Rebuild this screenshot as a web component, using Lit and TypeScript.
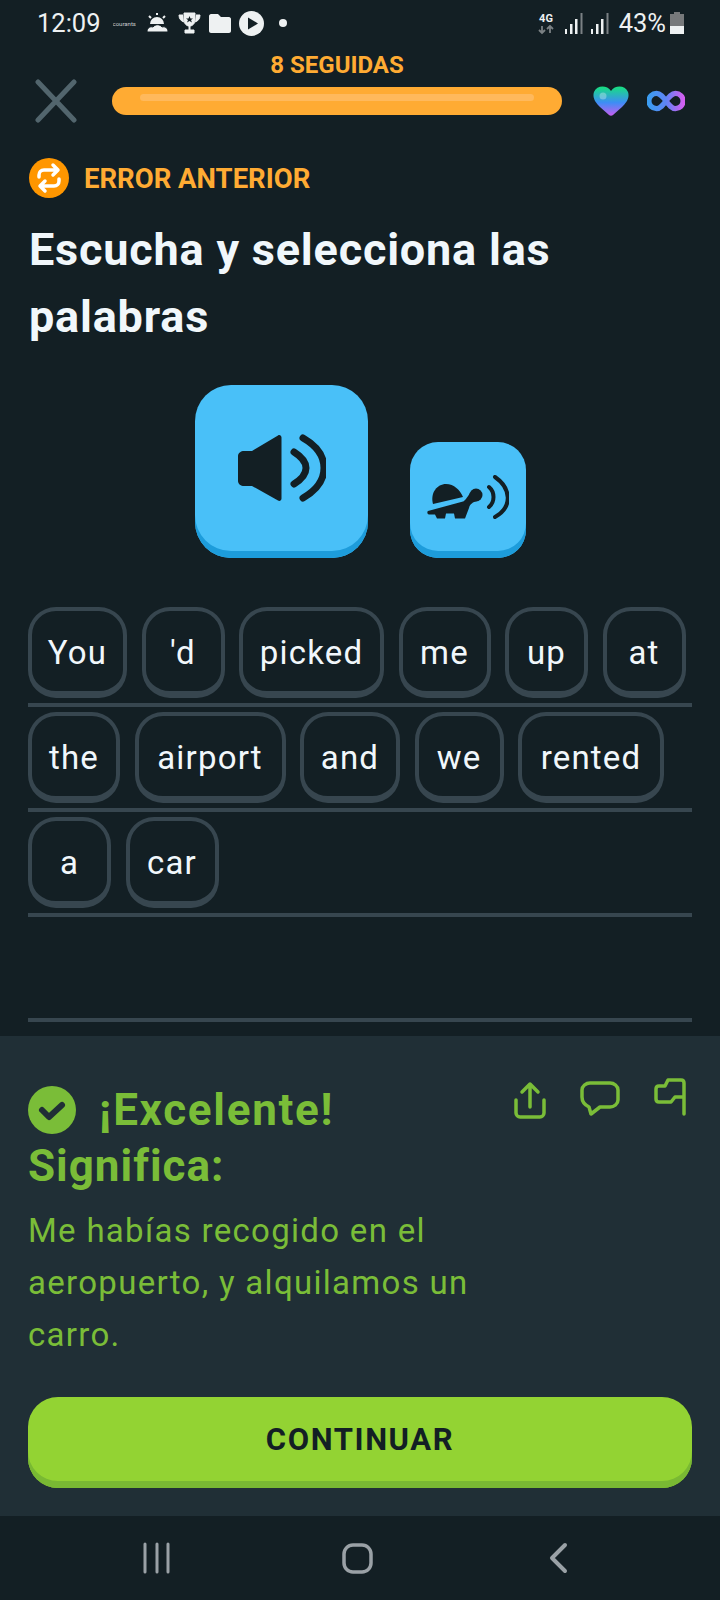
import { LitElement, html, css, svg } from 'lit';
import { customElement } from 'lit/decorators.js';

// chip widths are per word, the reference font is a bit wider than Roboto
const ROWS: [string, number][][] = [
  [['You', 99], ["'d", 83], ['picked', 145], ['me', 92], ['up', 83], ['at', 83]],
  [['the', 92], ['airport', 151], ['and', 100], ['we', 89], ['rented', 146]],
  [['a', 83], ['car', 93]],
  [],
];

const speaker = svg`
  <path d="M6 17h8L40 1.500c1.500-1 3.500 0 3.500 2v61c0 2-2 3-3.500 2L14 52H6c-3 0-6-2-6-5V22c0-3 3-5 6-5z" fill="#131f24"/>
  <path d="M56 18C72 28 72 40 56 50M65 4C93 20 93 48 65 64" fill="none" stroke="#131f24" stroke-width="7" stroke-linecap="round"/>`;

const turtle = svg`
  <path d="M6 29C3 18 10 9 19 9c8 0 14 6 17 13z" fill="#131f24"/>
  <path d="M1 36l35-9.500c2-.5 4-4 7-8.500l7 8c-4 1-7 3-8 7l-4 10.500H28l-1-5h-8l-1 5h-8l-2-4H2c-2 0-2-3-1-3.500z" fill="#131f24"/>
  <circle cx="49" cy="20" r="6.500" fill="#131f24"/>
  <path d="M62 12c6 5 6 15 0 20M68 2c16 11 18 30 0 40" fill="none" stroke="#131f24" stroke-width="4" stroke-linecap="round"/>`;

@customElement('app-root')
export class AppRoot extends LitElement {
  static styles = css`
    :host {
      display: block;
      width: 720px;
      height: 1600px;
      overflow: hidden;
      background: #131f24;
      font-family: Roboto, 'Liberation Sans', sans-serif;
      color: #f1f7fb;
    }
    .page {
      display: flex;
      flex-direction: column;
      height: 1600px;
    }
    .status {
      height: 46px;
      padding: 0 36px 0 37px;
      display: flex;
      align-items: center;
      color: #eef1f2;
      font-size: 25.500px;
      box-sizing: border-box;
    }
    .status .time { margin-right: 4px; }
    .status .tiny { font-size: 6px; width: 23px; margin-right: 10px; text-align: center; overflow: hidden; color: #c9cdcf; }
    .status .left { display: flex; align-items: center; gap: 8px; }
    .status .right { margin-left: auto; display: flex; align-items: center; }
    .status svg { display: block; }
    .dot { width: 8px; height: 8px; border-radius: 50%; background: #eef1f2; margin-left: 7px; }
    .pct { margin: 0 4px 0 9px; }

    .streak {
      height: 30px;
      margin-top: 4px;
      text-align: center;
      width: 674px;
      color: #ffab33;
      font-size: 24px;
      font-weight: 700;
      line-height: 30px;
    }
    .top {
      display: flex;
      align-items: center;
      height: 28px;
      margin-top: 7px;
      padding-left: 35px;
    }
    .close { margin-right: 35px; }
    .bar {
      width: 450px;
      height: 28px;
      border-radius: 14px;
      background: #ffab33;
      padding: 7px 28px;
      box-sizing: border-box;
      margin-right: 31px;
    }
    .bar i {
      display: block;
      height: 7px;
      border-radius: 4px;
      background: #ffb95c;
    }
    .top svg { display: block; flex: none; }

    .err {
      display: flex;
      align-items: center;
      margin: 43px 0 0 29px;
      height: 40px;
      gap: 15px;
      color: #ffab33;
      font-size: 27.500px;
      font-weight: 700;
    }
    h1 {
      margin: 18px 28px 0 29px;
      font-size: 45px;
      line-height: 67px;
      font-weight: 700;
      color: #f1f7fb;
      letter-spacing: 0.8px;
    }
    .audio {
      display: flex;
      align-items: flex-end;
      gap: 42px;
      margin: 35px 0 0 195px;
    }
    .sound {
      background: #49c0f8;
      box-shadow: inset 0 -7px 0 #1d9cdb;
      display: flex;
      align-items: center;
      justify-content: center;
      box-sizing: border-box;
    }
    .sound.big { width: 173px; height: 173px; border-radius: 36px; padding-bottom: 7px; }
    .sound.small { width: 116px; height: 116px; border-radius: 28px; padding-bottom: 6px; }
    .words { margin: 44px 28px 0; }
    .row {
      height: 105px;
      box-sizing: border-box;
      padding-bottom: 5px;
      border-bottom: 4px solid #37464f;
      display: flex;
      gap: 14.500px;
      align-items: flex-end;
    }
    .chip {
      height: 91px;
      box-sizing: border-box;
      border: 4px solid #37464f;
      border-bottom-width: 7px;
      border-radius: 28px;
      padding-top: 2px;
      display: flex;
      align-items: center;
      justify-content: center;
      font-size: 33px;
      letter-spacing: 1.200px;
      color: #f1f7fb;
    }
    .sheet {
      margin-top: auto;
      height: 480px;
      background: #202f36;
      padding: 45px 28px 0;
      box-sizing: border-box;
      color: #7abd38;
      display: flex;
      flex-direction: column;
    }
    .head { display: flex; align-items: flex-start; height: 108px; }
    .head .txt { font-size: 44px; font-weight: 700; line-height: 56px; letter-spacing: 1px; }
    .excl { display: flex; align-items: center; gap: 23px; margin-top: 1px; letter-spacing: 1.700px; }
    .excl svg { flex: none; }
    .acts { margin-left: auto; display: flex; align-items: flex-start; gap: 34px; margin-right: 4px; }
    .acts svg { display: block; }
    .msg { margin: 16px 0 0; font-size: 33px; line-height: 52px; width: 500px; letter-spacing: 1.300px; }
    .go {
      height: 91px;
      margin-top: 36px;
      border-radius: 30px;
      background: #93d333;
      box-shadow: inset 0 -7px 0 #79b933;
      display: flex;
      align-items: center;
      justify-content: center;
      padding-bottom: 7px;
      box-sizing: border-box;
      color: #131f24;
      font-size: 31px;
      font-weight: 700;
      letter-spacing: 1.600px;
    }
    .nav {
      height: 84px;
      display: flex;
      align-items: center;
      justify-content: center;
    }
    .nav svg { display: block; }
  `;

  render() {
    return html`
      <div class="page">
        <div class="status">
          <div class="left">
            <span class="time">12:09</span>
            <span class="tiny">courants</span>
          </div>
          <div class="left">
            <svg width="22" height="20" viewBox="0 0 22 20"><path d="M4 11a7 7 0 0 1 14 0z" fill="#eef1f2"/><path d="M1 19c0-4 3-6 6-5 2-3 7-3 9 0 3-1 6 1 6 5z" fill="#eef1f2" stroke="#131f24"/><path d="M11 0v2M3 3l2 2M19 3l-2 2" stroke="#eef1f2" stroke-width="2"/></svg>
            <svg width="23" height="23" viewBox="0 0 23 23" style="margin-left:2px"><path d="M6 1h11v7c0 4-3 6-5 6v4h4v3H7v-3h4v-4C9 14 6 12 6 8zM5 3H1c0 4 2 6 5 7M18 3h4c0 4-2 6-5 7" fill="#eef1f2" stroke="#eef1f2" stroke-width="1"/><path d="M11.500 4l1 2.500 2.500 0-2 1.500 1 2.500-2.500-1.500-2.500 1.500 1-2.500-2-1.500 2.500 0z" fill="#131f24"/></svg>
            <svg width="22" height="19" viewBox="0 0 22 19"><path d="M2 0h7l3 3h8c1 0 2 1 2 2v12c0 1-1 2-2 2H2c-1 0-2-1-2-2V2C0 1 1 0 2 0z" fill="#eef1f2"/></svg>
            <svg width="25" height="25" viewBox="0 0 25 25"><circle cx="12.500" cy="12.500" r="12.500" fill="#eef1f2"/><path d="M9 6.500l10 6-10 6z" fill="#131f24"/></svg>
            <span class="dot"></span>
          </div>
          <div class="right">
            <svg width="16" height="24" viewBox="0 0 16 24"><text x="8" y="11" text-anchor="middle" font-size="11" font-weight="700" fill="#eef1f2" font-family="Roboto">4G</text><path d="M4 15v7M1 19l3 3 3-3M12 22v-7M9 18l3-3 3 3" fill="none" stroke="#7b8184" stroke-width="1.800"/></svg>
            <svg width="20" height="21" viewBox="0 0 20 21" style="margin-left:10px"><path d="M1 16h2v5H1zM6 11h2.500v10H6zM11 6h2.500v15H11z" fill="#eef1f2"/><path d="M16.500 0h2v21h-2z" fill="#7b8184"/></svg>
            <svg width="20" height="21" viewBox="0 0 20 21" style="margin-left:6px"><path d="M1 16h2v5H1zM6 11h2.500v10H6zM11 6h2.500v15H11z" fill="#eef1f2"/><path d="M16.500 0h2v21h-2z" fill="#7b8184"/></svg>
            <span class="pct">43%</span>
            <svg width="14" height="22" viewBox="0 0 14 22"><path d="M4 0h6v2h4v13H0V2h4z" fill="#77797b"/><path d="M0 14h14v8H0z" fill="#eef1f2"/></svg>
          </div>
        </div>

        <div class="streak">8 SEGUIDAS</div>
        <div class="top">
          <svg class="close" width="42" height="44" viewBox="0 0 42 44"><path d="M3 3l36 38M39 3L3 41" stroke="#52656d" stroke-width="5" stroke-linecap="round"/></svg>
          <div class="bar"><i></i></div>
          <svg width="36" height="30" viewBox="0 0 36 30" style="margin-right:18px">
            <defs>
              <linearGradient id="h" x1="0" y1="0" x2="0" y2="1"><stop offset="0" stop-color="#16e07f"/><stop offset="0.55" stop-color="#3d8df5"/><stop offset="1" stop-color="#c75df0"/></linearGradient>
            </defs>
            <path d="M18 5C14-1 4-1 1 6c-2 6 2 11 6 15l9 8c1 1 3 1 4 0l9-8c4-4 8-9 6-15-3-7-13-7-17-1z" fill="url(#h)"/>
            <circle cx="10" cy="10" r="3.500" fill="#fff" opacity=".3"/>
          </svg>
          <svg width="38" height="22" viewBox="0 0 40 22">
            <defs>
              <linearGradient id="i" x1="0" y1="0" x2="1" y2="0"><stop offset="0" stop-color="#3b9cf0"/><stop offset="0.5" stop-color="#5f84f5"/><stop offset="1" stop-color="#d15ff0"/></linearGradient>
            </defs>
            <path d="M20 11c-3-4-6-8-10-8a8 8 0 0 0 0 16c4 0 7-4 10-8 3-4 6-8 10-8a8 8 0 0 1 0 16c-4 0-7-4-10-8z" fill="none" stroke="url(#i)" stroke-width="5.500"/>
          </svg>
        </div>

        <div class="err">
          <svg width="40" height="40" viewBox="0 0 40 40">
            <circle cx="20" cy="20" r="20" fill="#ff9600"/>
            <path d="M10 19v-2c0-3 2-5 5-5h13M24 7l5 5-5 5M30 21v2c0 3-2 5-5 5H12M16 23l-5 5 5 5" fill="none" stroke="#fff" stroke-width="3.500" stroke-linecap="round" stroke-linejoin="round"/>
          </svg>
          <span>ERROR ANTERIOR</span>
        </div>
        <h1>Escucha y selecciona las palabras</h1>

        <div class="audio">
          <div class="sound big"><svg width="88" height="68" viewBox="0 0 88 68">${speaker}</svg></div>
          <div class="sound small"><svg width="82" height="44" viewBox="0 0 82 44">${turtle}</svg></div>
        </div>

        <div class="words">
          ${ROWS.map((r) => html`<div class="row">${r.map(([w, width]) => html`<div class="chip" style="width:${width}px">${w}</div>`)}</div>`)}
        </div>

        <div class="sheet">
          <div class="head">
            <div class="txt">
              <div class="excl">
                <svg width="48" height="48" viewBox="0 0 48 48"><circle cx="24" cy="24" r="24" fill="#7abd38"/><path d="M14 24l7 7 13-12" fill="none" stroke="#202f36" stroke-width="6" stroke-linecap="round" stroke-linejoin="round"/></svg>
                <span>¡Excelente!</span>
              </div>
              <div>Significa:</div>
            </div>
            <div class="acts">
              <svg width="32" height="38" viewBox="0 0 32 38"><path d="M2 19v13c0 2 2 4 4 4h20c2 0 4-2 4-4V19M16 26V3M8 11l8-8 8 8" fill="none" stroke="#7abd38" stroke-width="3.500" stroke-linecap="round" stroke-linejoin="round"/></svg>
              <svg width="40" height="36" viewBox="0 0 40 36"><path d="M10 2h20c4 0 8 3 8 7v10c0 4-4 7-8 7H20l-9 7-2-7C5 24 2 20 2 16V9c0-4 4-7 8-7z" fill="none" stroke="#7abd38" stroke-width="3.500" stroke-linejoin="round"/></svg>
              <svg width="34" height="40" viewBox="0 0 34 40" style="margin-top:-4px"><path d="M30 37V6c0-2-1-3-3-3H14l-3 6H5c-2 0-3 1-3 3v10c0 2 1 3 3 3h12l4-5h9" fill="none" stroke="#7abd38" stroke-width="3.500" stroke-linecap="round" stroke-linejoin="round"/></svg>
            </div>
          </div>
          <p class="msg">Me habías recogido en el aeropuerto, y alquilamos un carro.</p>
          <div class="go">CONTINUAR</div>
        </div>

        <div class="nav">
          <svg width="440" height="32" viewBox="0 0 440 32" style="margin-left:4px">
            <path d="M3 2v28M15 2v28M26 2v28" stroke="#9aa1a6" stroke-width="3" stroke-linecap="round"/>
            <rect x="202" y="3" width="27" height="27" rx="9" fill="none" stroke="#9aa1a6" stroke-width="3.500"/>
            <path d="M423 3l-13 13 13 13" fill="none" stroke="#9aa1a6" stroke-width="4" stroke-linecap="round" stroke-linejoin="round"/>
          </svg>
        </div>
      </div>
    `;
  }
}
